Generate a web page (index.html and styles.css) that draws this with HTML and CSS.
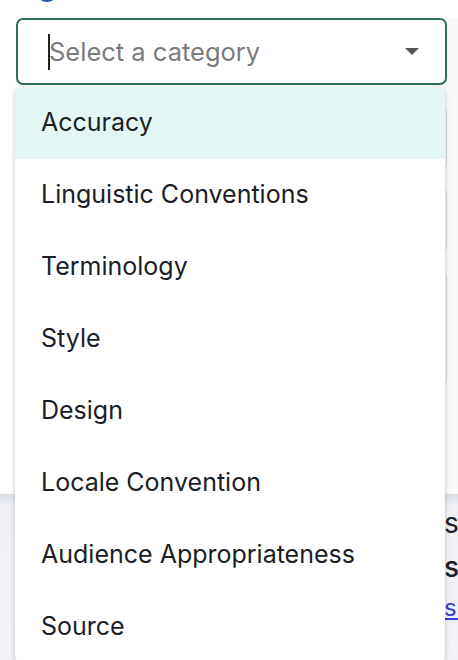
FILE: index.html
```html
<!DOCTYPE html>
<html>
<head>
<meta charset="utf-8">
<link rel="stylesheet" href="styles.css">
</head>
<body>
<div class="page">
  <div class="top">
    <div class="avatar"></div>
  </div>
  <div class="form">
    <div class="select-wrap">
      <div class="select">
        <span class="caret"></span>
        <span class="placeholder">Select a category</span>
        <svg class="arrow" width="14" height="8" viewBox="0 0 14 8"><path d="M0 0 H14 L7 7 Z" fill="#555"/></svg>
      </div>
      <ul class="menu">
        <li class="item active">Accuracy</li>
        <li class="item">Linguistic Conventions</li>
        <li class="item">Terminology</li>
        <li class="item">Style</li>
        <li class="item">Design</li>
        <li class="item">Locale Convention</li>
        <li class="item">Audience Appropriateness</li>
        <li class="item">Source</li>
      </ul>
    </div>
    <div class="card c1"></div>
    <div class="card c2"></div>
    <div class="card c3"></div>
  </div>
  <div class="lower">
    <p class="line l1">si</p>
    <p class="line l2">s</p>
    <p class="line l3"><a href="#">s3</a></p>
  </div>
</div>
</body>
</html>
```
FILE: styles.css
```css
html, body {
  margin: 0;
  padding: 0;
  overflow: hidden;
  background: #ffffff;
  font-family: Inter, "Noto Sans", sans-serif;
}
.page {
  width: 458px;
  height: 660px;
  display: flex;
  flex-direction: column;
  overflow: hidden;
}
.top {
  height: 18px;
  padding-left: 36px;
}
.avatar {
  width: 22px;
  height: 22px;
  border-radius: 50%;
  background: #24579f;
  margin-top: -20px;
}
.form {
  padding: 0 11px 0 16px;
  background: linear-gradient(to right, #ffffff 431px, #f9f9fa 431px);
  height: 476px;
  display: flex;
  flex-direction: column;
}
.select-wrap {
  position: relative;
}
.select {
  height: 63px;
  border: 2px solid #2e7154;
  border-radius: 7px;
  display: flex;
  align-items: center;
  padding: 0 26px 0 30px;
  background: #fff;
}
.caret {
  width: 2px;
  height: 36px;
  background: #222;
}
.placeholder {
  flex: 1;
  font-size: 25.5px;
  color: #7b7b7b;
  margin-left: -1px;
}
.arrow {
  display: block;
}
.card {
  border: 1px solid #d9d9de;
  border-radius: 6px;
  background: #fff;
}
.c1 { margin-top: 21px; height: 62px; }
.c2 { margin-top: 18px; height: 62px; }
.c3 { margin-top: 20px; height: 112px; }
.menu {
  position: absolute;
  left: -1px;
  top: 69px;
  width: 430px;
  margin: 0;
  padding: 0;
  list-style: none;
  background: #fff;
  border-radius: 7px;
  box-shadow: 0 1px 5px rgba(0, 0, 0, 0.22);
  z-index: 5;
  overflow: hidden;
}
.item {
  height: 72px;
  display: flex;
  align-items: center;
  padding-left: 26px;
  padding-bottom: 2px;
  box-sizing: border-box;
  font-size: 25px;
  color: #1b1e26;
}
.item.active {
  background: #e3f6f4;
}
.lower {
  flex: 1;
  background: linear-gradient(to bottom, #dcdee6 0px, #eef0f6 12px, #f1f2f7 100%);
  overflow: hidden;
  padding-left: 444px;
}
.line {
  margin: 0;
  font-size: 28px;
  color: #1b1e26;
  white-space: nowrap;
}
.l1 { padding-top: 12px; }
.l2 { padding-top: 10px; font-weight: 500; }
.l3 { padding-top: 9px; font-size: 24px; }
.l3 a { color: #3b3bd6; }
```
